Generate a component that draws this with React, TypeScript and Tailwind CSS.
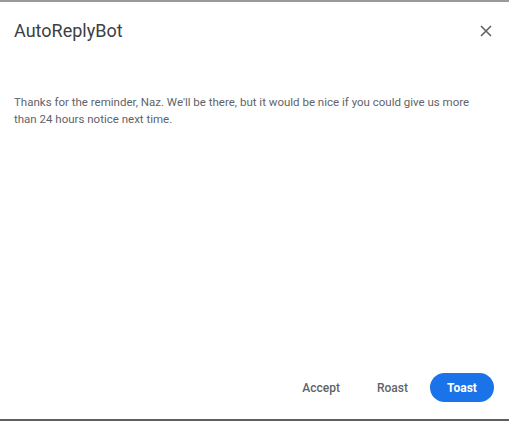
import React from "react";

export default function App() {
  return (
    <div className="w-[509px] h-[422px] bg-white" style={{ fontFamily: "Roboto, 'Noto Sans', sans-serif" }}>
      <div className="h-[421px] flex flex-col border-t-2 border-b-2 border-t-[#9a9a9a] border-b-[#5f5f5f]">
        <div className="flex items-center justify-between pl-[14px] pr-[17px] pt-[17px]">
          <div className="text-[18px] leading-[24px] text-[#3c4043]">AutoReplyBot</div>
          <svg width="12" height="12" viewBox="0 0 12 12" className="text-[#5f6368]">
            <path d="M1 1 L11 11 M11 1 L1 11" stroke="currentColor" strokeWidth="1.6" fill="none" />
          </svg>
        </div>
        <div className="px-[14px] pt-[51px] text-[11.5px] leading-[17px] text-[#5f6368]">
          Thanks for the reminder, Naz. We'll be there, but it would be nice if you could give us more
          <br />
          than 24 hours notice next time.
        </div>
        <div className="flex-1" />
        <div className="flex justify-end items-center gap-[6px] pr-[15px] pb-[17px]">
          <button className="h-[29px] px-[15px] rounded-full text-[12px] font-medium text-[#5f6368]">Accept</button>
          <button className="h-[29px] px-[16px] rounded-full text-[12px] font-medium text-[#5f6368]">Roast</button>
          <button className="h-[29px] w-[64px] rounded-full text-[12px] font-bold text-white bg-[#1a73e8]">Toast</button>
        </div>
      </div>
    </div>
  );
}
